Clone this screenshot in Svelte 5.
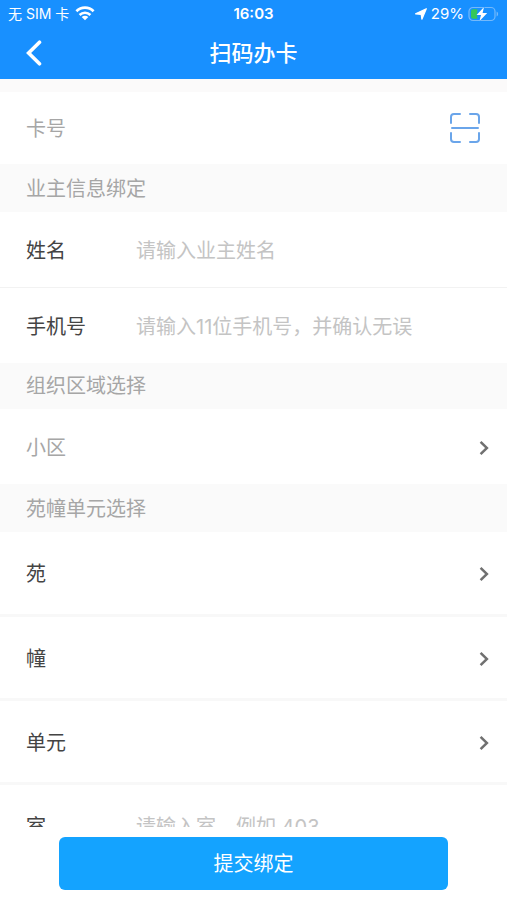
<script lang="ts">
	interface Picker {
		id: string;
		label: string;
	}

	const pickers: Picker[] = [
		{ id: 'garden', label: '苑' },
		{ id: 'building', label: '幢' },
		{ id: 'unit', label: '单元' }
	];

	let cardNo = $state('');
	let ownerName = $state('');
	let phone = $state('');
	let room = $state('');

	function handleSubmit(e: SubmitEvent) {
		e.preventDefault();
	}
</script>

{#snippet chevron()}
	<svg class="chevron" viewBox="0 0 10 16" width="10" height="16" aria-hidden="true">
		<path d="M1.6 1.9L7.9 8 1.6 14.1" fill="none" stroke="#707070" stroke-width="2.5" />
	</svg>
{/snippet}

<form class="page" onsubmit={handleSubmit}>
	<header class="top">
		<div class="status-bar">
			<div class="status-side">
				<span>无 SIM 卡</span>
				<svg viewBox="0 0 20 15" width="20" height="15" fill="none" stroke="#fff" stroke-width="2.7" aria-hidden="true">
					<path d="M1.4 5.2C6.2 0.5 13.8 0.5 18.6 5.2" />
					<path d="M4.6 8.9C7.7 6 12.3 6 15.4 8.9" />
					<path d="M10 14.3L6.7 11C8.5 9.4 11.5 9.4 13.3 11Z" fill="#fff" stroke="none" />
				</svg>
			</div>
			<span class="time">16:03</span>
			<div class="status-side right">
				<svg viewBox="0 0 12 12" width="12" height="12" aria-hidden="true">
					<path d="M11.3 0.7L6.9 11.2 6.2 6.4 0.6 5.8Z" fill="#fff" stroke="#fff" stroke-width="1.2" stroke-linejoin="round" />
				</svg>
				<span class="percent">29%</span>
				<svg viewBox="0 0 31 16" width="31" height="16" aria-hidden="true">
					<rect x="1" y="1.5" width="26" height="13" rx="4" fill="none" stroke="#74b9fb" stroke-width="1.2" />
					<path d="M28.6 5.5C30.6 6.3 30.6 9.7 28.6 10.5Z" fill="#74b9fb" />
					<path d="M5 3.2H9.2V12.8H5Q3 12.8 3 10.8V5.2Q3 3.2 5 3.2Z" fill="#35c759" />
					<path d="M16 1L8.6 9H13L11.4 15.2 19.2 6.9H14.6Z" fill="#fff" stroke="#1890ff" stroke-width="0.8" paint-order="stroke" />
				</svg>
			</div>
		</div>
		<div class="nav-bar">
			<button type="button" class="icon-btn" aria-label="返回">
				<svg viewBox="0 0 16 26" width="16" height="26" aria-hidden="true">
					<path d="M13.5 2.2L2.6 13 13.5 23.8" fill="none" stroke="#fff" stroke-width="3.6" stroke-linecap="round" />
				</svg>
			</button>
			<h1>扫码办卡</h1>
		</div>
	</header>

	<main class="content">
		<div class="row card-row">
			<input type="text" aria-label="卡号" placeholder="卡号" bind:value={cardNo} />
			<button type="button" class="icon-btn" aria-label="扫码">
				<svg viewBox="0 0 32 32" width="32" height="32" fill="none" stroke="#6aa5ea" stroke-width="2" stroke-linecap="round" aria-hidden="true">
					<path d="M11 1H5Q2 1 2 4V10M21 1H27Q30 1 30 4V10M2 20V26Q2 29 5 29H11M30 20V26Q30 29 27 29H21M3 15H29" />
				</svg>
			</button>
		</div>

		<h2>业主信息绑定</h2>
		<div class="row">
			<label for="owner-name">姓名</label>
			<input id="owner-name" type="text" placeholder="请输入业主姓名" bind:value={ownerName} />
		</div>
		<div class="row divided">
			<label for="phone">手机号</label>
			<input id="phone" type="tel" placeholder="请输入11位手机号，并确认无误" bind:value={phone} />
		</div>

		<h2 class="short">组织区域选择</h2>
		<button type="button" class="row picker muted">
			<span>小区</span>
			{@render chevron()}
		</button>

		<h2>苑幢单元选择</h2>
		<div class="group">
			{#each pickers as picker (picker.id)}
				<button type="button" class="row picker tall">
					<span>{picker.label}</span>
					{@render chevron()}
				</button>
			{/each}
			<div class="row tall">
				<label for="room">室</label>
				<input id="room" type="text" placeholder="请输入室，例如 403" bind:value={room} />
			</div>
		</div>
	</main>

	<footer class="actions">
		<button type="submit" class="submit">提交绑定</button>
	</footer>
</form>

<style>
	:global(body) {
		margin: 0;
	}

	.page {
		display: flex;
		flex-direction: column;
		height: 100vh;
		background: #fff;
		font-family: Inter, 'Noto Sans CJK SC', sans-serif;
		font-size: 20px;
		line-height: 28px;
		color: #444;
	}

	button,
	input {
		font: inherit;
		color: inherit;
		border: none;
		background: none;
		padding: 0;
		margin: 0;
	}

	button {
		cursor: pointer;
	}

	.top {
		background: #1890ff;
		color: #fff;
		flex-shrink: 0;
	}

	.status-bar {
		display: grid;
		grid-template-columns: 1fr auto 1fr;
		align-items: center;
		height: 27px;
		padding: 0 8px;
		font-size: 14px;
		line-height: 20px;
	}

	.status-side {
		display: flex;
		align-items: center;
		gap: 6px;
	}

	.status-side.right {
		justify-content: flex-end;
		gap: 4px;
	}

	.time,
	.percent {
		font-size: 15px;
	}

	.time {
		font-weight: 600;
	}

	.nav-bar {
		display: grid;
		grid-template-columns: 1fr auto 1fr;
		align-items: center;
		height: 52px;
		padding: 0 26px;
	}

	.nav-bar .icon-btn {
		justify-self: start;
	}

	.icon-btn {
		display: flex;
	}

	h1 {
		margin: 0;
		font-size: 22px;
		line-height: 32px;
		font-weight: 500;
	}

	.content {
		flex: 1;
		min-height: 0;
		overflow-y: auto;
		scrollbar-width: none;
		border-top: 13px solid #fbfafa;
	}

	h2 {
		margin: 0;
		padding: 11px 26px 9px;
		font-size: 20px;
		font-weight: 400;
		background: #fafafa;
		color: #a6a6a6;
	}

	h2.short {
		padding: 9px 26px;
	}

	.row {
		display: flex;
		align-items: center;
		box-sizing: border-box;
		width: 100%;
		height: 75px;
		padding: 2px 26px 0;
	}

	.card-row {
		height: 72px;
	}

	.row.divided {
		height: 76px;
		border-top: 1px solid #f2f2f2;
	}

	.row.tall {
		height: 84px;
		border-top: 3px solid #f8f8f8;
	}

	.group .row:first-child {
		height: 82px;
		border-top: none;
	}

	.row label {
		width: 110px;
		flex-shrink: 0;
	}

	.row input {
		flex: 1;
		min-width: 0;
		height: 28px;
		outline: none;
	}

	.row input::placeholder {
		color: #c4c4c4;
		opacity: 1;
	}

	.card-row input::placeholder {
		color: #a6a6a6;
	}

	.row.picker {
		justify-content: space-between;
		padding-right: 18px;
		text-align: left;
	}

	.picker.muted {
		color: #a6a6a6;
	}

	.chevron {
		flex-shrink: 0;
	}

	.actions {
		flex-shrink: 0;
		padding: 10px 59px;
		background: #fff;
	}

	.submit {
		display: block;
		width: 100%;
		height: 53px;
		border-radius: 6px;
		background: #14a3ff;
		color: #fff;
	}
</style>
